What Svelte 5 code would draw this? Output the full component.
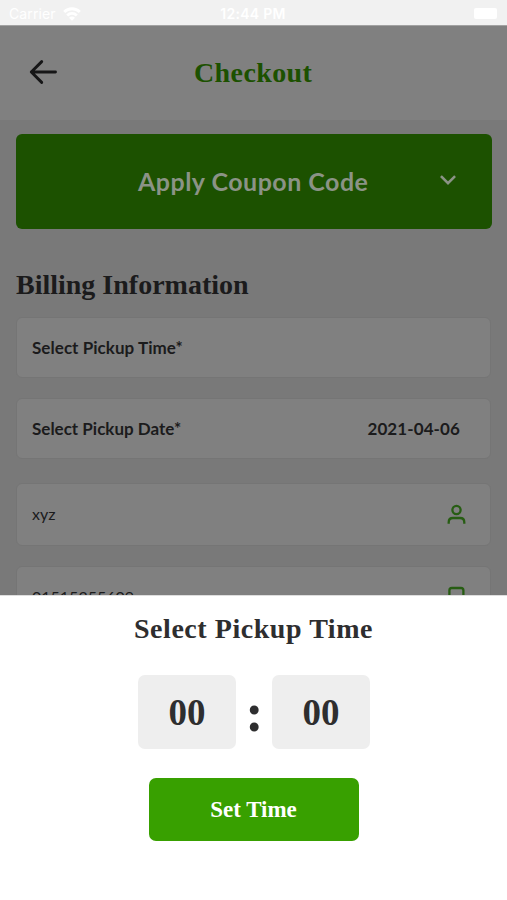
<script>
  let hours = $state('00');
  let minutes = $state('00');
</script>

<div class="screen">
  <div class="status">
    <div class="left">
      <span class="carrier">Carrier</span>
      <svg width="18" height="14" viewBox="0 0 18 14" fill="none" stroke="#fff" stroke-width="2.8">
        <path d="M1.2 5a11 11 0 0 1 15.6 0M4.2 8.4a6.8 6.8 0 0 1 9.6 0" />
        <path d="M9 13.8 6 10.7a4.2 4.2 0 0 1 6 0Z" fill="#fff" stroke="none" />
      </svg>
    </div>
    <span class="clock">12:44 PM</span>
    <div class="right"><span class="battery"></span></div>
  </div>

  <header>
    <svg class="back" width="30" height="26" viewBox="0 0 30 26" fill="none" stroke="#161617" stroke-width="2.9" stroke-linecap="round" stroke-linejoin="round">
      <path d="M27.5 13H3.3M13.7 2.6 3.3 13l10.4 10.4" />
    </svg>
    <h1>Checkout</h1>
  </header>

  <main>
    <button class="coupon">
      <span>Apply Coupon Code</span>
      <svg width="18" height="12" viewBox="0 0 18 12" fill="none" stroke="#8b9386" stroke-width="2.5" stroke-linecap="square">
        <path d="m2.8 2 6.2 6.2L15.2 2" />
      </svg>
    </button>
    <h2>Billing Information</h2>
    <div class="field time"><b class="tlabel">Select Pickup Time*</b></div>
    <div class="field date"><b class="dlabel">Select Pickup Date*</b><b class="day">2021-04-06</b></div>
    <div class="field name">
      <span class="xyz">xyz</span>
      <svg width="20" height="22" viewBox="0 0 20 22" fill="none" stroke="#275d13" stroke-width="2.3">
        <circle cx="10.5" cy="6" r="4.1" />
        <path d="M2.7 19.8v-1.5q0-4.3 4.3-4.3h7q4.3 0 4.3 4.3v1.5" />
      </svg>
    </div>
    <div class="field phone">
      <span class="number">01515255609</span>
      <svg width="20" height="24" viewBox="0 0 20 24" fill="none" stroke="#275d13" stroke-width="2.3">
        <rect x="3.4" y="2" width="14" height="20" rx="2.4" />
      </svg>
    </div>
  </main>

  <section class="sheet">
    <h3>Select Pickup Time</h3>
    <div class="picker">
      <div class="digit">{hours}</div>
      <div class="colon">:</div>
      <div class="digit">{minutes}</div>
    </div>
    <button class="set">Set Time</button>
  </section>
</div>

<style>
  :global(body) { margin: 0; background: #fff; }
  .screen {
    width: 507px; height: 900px; overflow: hidden;
    display: flex; flex-direction: column;
    background: #797979; color: #1b1b1c;
    font-family: Lato, "Open Sans", sans-serif;
  }
  .screen * { box-sizing: border-box; }
  h1, h2, h3 { margin: 0; font-family: "Liberation Serif", serif; font-weight: 700; font-size: 28px; line-height: 32px; white-space: nowrap; }
  button { border: 0; padding: 0; margin: 0; }
  .status {
    flex: none; height: 26px; background: #f1f1f1; border-bottom: 1px solid #a2a2a2; color: #fff;
    display: grid; grid-template-columns: 1fr auto 1fr; align-items: center;
    font: 500 14px/18px Inter, sans-serif; padding: 2px 10px 0 9px;
  }
  .left { display: flex; align-items: center; gap: 7px; }
  .carrier { font-weight: 400; letter-spacing: .1px; }
  .clock { font-weight: 600; letter-spacing: .3px; }
  .right { display: flex; justify-content: flex-end; }
  .battery { width: 23px; height: 11px; border-radius: 2px; background: #fff; }
  header { flex: none; height: 94px; background: #808080; display: grid; grid-template-columns: 194px auto 1fr; align-items: center; }
  .back { margin: -3px 0 0 28px; }
  h1 { color: #1c5100; letter-spacing: .4px; }
  main { height: 475px; flex: none; padding: 14px 16px 0; overflow: hidden; display: flex; flex-direction: column; }
  .coupon {
    flex: none; height: 95px; width: 476px; border-radius: 6px; background: #1c5100; color: #8b9386;
    display: grid; grid-template-columns: 122px 1fr auto; align-items: center; padding: 0 35px 2px 0;
    font: 700 25px/30px Lato, sans-serif; text-align: left; white-space: nowrap;
  }
  .coupon span { grid-column: 2; letter-spacing: .48px; }
  h2 { margin-top: 40px; flex: none; }
  .field {
    flex: none; width: 475px; background: #808080; border: 1px solid #757575; border-radius: 6px;
    display: flex; align-items: center; justify-content: space-between;
    padding: 0 24px 0 15px; font-size: 17px; line-height: 20px;
  }
  .time { height: 61px; margin-top: 16px; padding-top: 1px; }
  .date { height: 61px; margin-top: 20px; padding-right: 30px; padding-top: 1px; }
  .name { height: 63px; margin-top: 24px; }
  .phone { height: 63px; margin-top: 20px; }
  .tlabel { letter-spacing: .05px; }
  .dlabel { letter-spacing: 0; }
  .day { letter-spacing: .1px; }
  .xyz, .number { font-size: 16px; }
  .xyz { margin-top: -2px; }
  .number { margin-top: -2px; }
  .sheet { flex: none; height: 305px; background: #fff; color: #2e2e2f; border-top: 1px solid #dedede; display: flex; flex-direction: column; align-items: center; padding-top: 17px; font-family: "Liberation Serif", serif; }
  h3 { letter-spacing: .55px; }
  .picker { display: flex; margin: 30px 0 0 1px; height: 74px; }
  .digit { width: 98px; height: 74px; border-radius: 7px; background: #eee; font: 700 37px/76px "Liberation Serif", serif; text-align: center; }
  .colon { width: 36px; padding-left: 1px; font: 700 55px/76px "Liberation Serif", serif; text-align: center; }
  .set { margin-top: 29px; width: 210px; height: 63px; border-radius: 7px; background: #38a000; color: #fff; font: 700 23px/63px "Liberation Serif", serif; }
</style>
